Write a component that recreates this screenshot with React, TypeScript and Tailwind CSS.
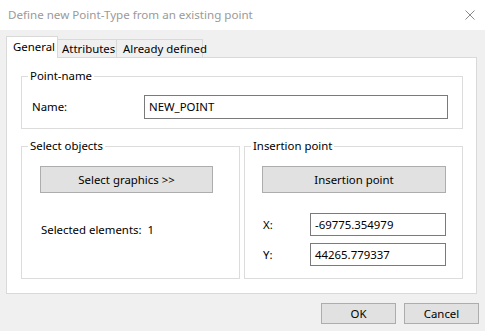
import React from "react";

function GroupBox({ title, className, children }: { title: string; className?: string; children?: React.ReactNode }) {
  return (
    <div className={"relative border border-[#dcdcdc] " + (className ?? "")}>
      <span className="absolute -top-[9px] left-[6px] bg-white px-[2px] leading-[16px]">{title}</span>
      {children}
    </div>
  );
}

function Field({ value, className }: { value: string; className?: string }) {
  return (
    <div className={"flex items-center border border-[#7a7a7a] bg-white pl-[4px] " + (className ?? "")}>
      {value}
    </div>
  );
}

function Btn({ label, className }: { label: string; className?: string }) {
  return (
    <div className={"flex items-center justify-center border border-[#adadad] bg-[#e1e1e1] " + (className ?? "")}>
      {label}
    </div>
  );
}

export default function App() {
  return (
    <div className="w-[485px] h-[331px] bg-[#f0f0f0] text-[11.4px] text-black flex flex-col overflow-hidden whitespace-nowrap" style={{ fontFamily: '"Noto Sans", "Open Sans", sans-serif' }}>
      {/* title bar */}
      <div className="h-[30px] bg-white flex items-center justify-between pl-[8px] pr-[10px] shrink-0">
        <span className="text-[#9a9a9a] text-[11.6px]">Define new Point-Type from an existing point</span>
        <svg width="10" height="10" viewBox="0 0 10 10" className="stroke-[#8a8a8a]">
          <path d="M0.5 0.5 L9.5 9.5 M9.5 0.5 L0.5 9.5" strokeWidth="1" fill="none" />
        </svg>
      </div>

      {/* tabs */}
      <div className="flex items-end h-[27px] pl-[6px] pt-[7px] shrink-0">
        <div className="w-[52px] bg-white border border-b-0 border-[#d9d9d9] pl-[6px] flex items-start pt-[1px] relative z-10 -mb-[1px] h-[22px]">
          General
        </div>
        <div className="h-[18px] w-[59px] border border-l-0 border-b-0 border-[#d9d9d9] bg-[#f0f0f0] flex items-center pl-[4px]">
          Attributes
        </div>
        <div className="h-[18px] w-[86px] border border-l-0 border-b-0 border-[#d9d9d9] bg-[#f0f0f0] flex items-center pl-[6px]">
          Already defined
        </div>
      </div>

      {/* panel */}
      <div className="ml-[6px] w-[471px] h-[237px] bg-white border border-[#d9d9d9] pl-[14px] pt-[18px] shrink-0">
        <GroupBox title="Point-name" className="w-[442px] h-[53px]">
          <div className="flex items-center pt-[18px]">
            <span className="w-[122px] pl-[10px]">Name:</span>
            <Field value="NEW_POINT" className="w-[304px] h-[24px]" />
          </div>
        </GroupBox>

        <div className="flex gap-[4px] mt-[17px]">
          <GroupBox title="Select objects" className="w-[219px] h-[133px]">
            <div className="pl-[18px] pt-[19px]">
              <Btn label="Select graphics >>" className="w-[173px] h-[27px]" />
              <div className="pl-[1px] mt-[28px]">Selected elements:&nbsp;&nbsp;1</div>
            </div>
          </GroupBox>
          <GroupBox title="Insertion point" className="w-[219px] h-[133px]">
            <div className="pl-[17px] pt-[19px]">
              <Btn label="Insertion point" className="w-[184px] h-[27px]" />
              <div className="flex items-center mt-[20px]">
                <span className="w-[48px] pl-[1px]">X:</span>
                <Field value="-69775.354979" className="w-[136px] h-[23px]" />
              </div>
              <div className="flex items-center mt-[7px]">
                <span className="w-[48px] pl-[1px]">Y:</span>
                <Field value="44265.779337" className="w-[136px] h-[23px]" />
              </div>
            </div>
          </GroupBox>
        </div>
      </div>

      {/* footer */}
      <div className="flex justify-end gap-[8px] pr-[6px] pt-[9px]">
        <Btn label="OK" className="w-[75px] h-[21px]" />
        <Btn label="Cancel" className="w-[75px] h-[21px]" />
      </div>
    </div>
  );
}
